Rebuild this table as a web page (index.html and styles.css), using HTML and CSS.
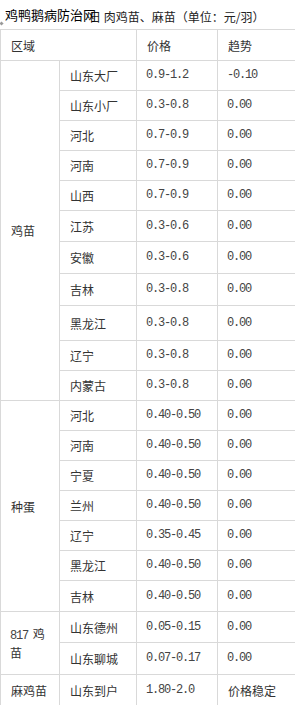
FILE: index.html
```html
<!DOCTYPE html>
<html lang="zh">
<head>
<meta charset="utf-8">
<link rel="stylesheet" href="styles.css">
</head>
<body>
<div class="title">
  <span class="caption">日 肉鸡苗、麻苗（单位：元/羽）</span>
  <span class="watermark">鸡鸭鹅病防治网</span>
  <span class="mark"></span>
</div>
<table class="grid">
  <colgroup><col class="c1"><col class="c2"><col class="c3"><col class="c4"></colgroup>
  <tr class="h31"><td colspan="2">区域</td><td>价格</td><td>趋势</td></tr>
  <tr class="h30"><td rowspan="11">鸡苗</td><td>山东大厂</td><td class="num">0.9-1.2</td><td class="num">-0.10</td></tr>
  <tr class="h30"><td>山东小厂</td><td class="num">0.3-0.8</td><td class="num">0.00</td></tr>
  <tr class="h30"><td>河北</td><td class="num">0.7-0.9</td><td class="num">0.00</td></tr>
  <tr class="h30"><td>河南</td><td class="num">0.7-0.9</td><td class="num">0.00</td></tr>
  <tr class="h30"><td>山西</td><td class="num">0.7-0.9</td><td class="num">0.00</td></tr>
  <tr class="h31"><td>江苏</td><td class="num">0.3-0.6</td><td class="num">0.00</td></tr>
  <tr class="h32"><td>安徽</td><td class="num">0.3-0.6</td><td class="num">0.00</td></tr>
  <tr class="h32"><td>吉林</td><td class="num">0.3-0.8</td><td class="num">0.00</td></tr>
  <tr class="h35"><td>黑龙江</td><td class="num">0.3-0.8</td><td class="num">0.00</td></tr>
  <tr class="h30"><td>辽宁</td><td class="num">0.3-0.8</td><td class="num">0.00</td></tr>
  <tr class="h30"><td>内蒙古</td><td class="num">0.3-0.8</td><td class="num">0.00</td></tr>
  <tr class="h30"><td rowspan="7">种蛋</td><td>河北</td><td class="num">0.40-0.50</td><td class="num">0.00</td></tr>
  <tr class="h30"><td>河南</td><td class="num">0.40-0.50</td><td class="num">0.00</td></tr>
  <tr class="h30"><td>宁夏</td><td class="num">0.40-0.50</td><td class="num">0.00</td></tr>
  <tr class="h30"><td>兰州</td><td class="num">0.40-0.50</td><td class="num">0.00</td></tr>
  <tr class="h30"><td>辽宁</td><td class="num">0.35-0.45</td><td class="num">0.00</td></tr>
  <tr class="h30"><td>黑龙江</td><td class="num">0.40-0.50</td><td class="num">0.00</td></tr>
  <tr class="h31"><td>吉林</td><td class="num">0.40-0.50</td><td class="num">0.00</td></tr>
  <tr class="h31"><td rowspan="2" class="wrap"><span class="line"><span class="digits">817</span> 鸡</span><span class="line">苗</span></td><td>山东德州</td><td class="num">0.05-0.15</td><td class="num">0.00</td></tr>
  <tr class="h32"><td>山东聊城</td><td class="num">0.07-0.17</td><td class="num">0.00</td></tr>
  <tr class="h31"><td>麻鸡苗</td><td>山东到户</td><td class="num">1.80-2.0</td><td>价格稳定</td></tr>
</table>
</body>
</html>
```
FILE: styles.css
```css
html, body {
  margin: 0;
  padding: 0;
  overflow: hidden;
  background: #fff;
}
body {
  font-family: "Noto Sans CJK SC", "Liberation Sans", sans-serif;
  font-size: 12px;
  color: #333;
  width: 295px;
}
.title {
  position: relative;
  height: 29px;
  line-height: 29px;
  padding-left: 89px;
  box-sizing: border-box;
  white-space: nowrap;
  color: #222;
}
.caption {
  position: relative;
  top: 2px;
}
.watermark {
  position: absolute;
  left: 5px;
  top: 0px;
  font-size: 13px;
  line-height: 29px;
  color: #000;
}
.mark {
  position: absolute;
  left: 0;
  top: 22px;
  width: 3px;
  height: 3px;
  background: #999;
  transform: rotate(45deg);
}
.grid {
  border-collapse: collapse;
  table-layout: fixed;
  width: 300px;
}
.c1 { width: 59px; }
.c2 { width: 77px; }
.c3 { width: 81px; }
.c4 { width: 83px; }
.grid td {
  border: 1px solid #d9d9d9;
  padding: 0 9px 0 10px;
  line-height: 17px;
  vertical-align: middle;
  white-space: normal;
  box-sizing: border-box;
}
.grid td.wrap {
  line-height: 19px;
  padding-left: 9px;
}
.line {
  display: block;
  height: 19px;
  white-space: nowrap;
}
.grid td.num, .digits {
  font-family: "Liberation Mono", monospace;
  letter-spacing: -1.2px;
  color: #444;
}
.digits { margin-right: 2px; }
.grid td.num { padding-left: 9px; }
.h30 td { height: 30px; }
.h31 td { height: 31px; }
.h32 td { height: 32px; }
.h35 td { height: 35px; }
```
